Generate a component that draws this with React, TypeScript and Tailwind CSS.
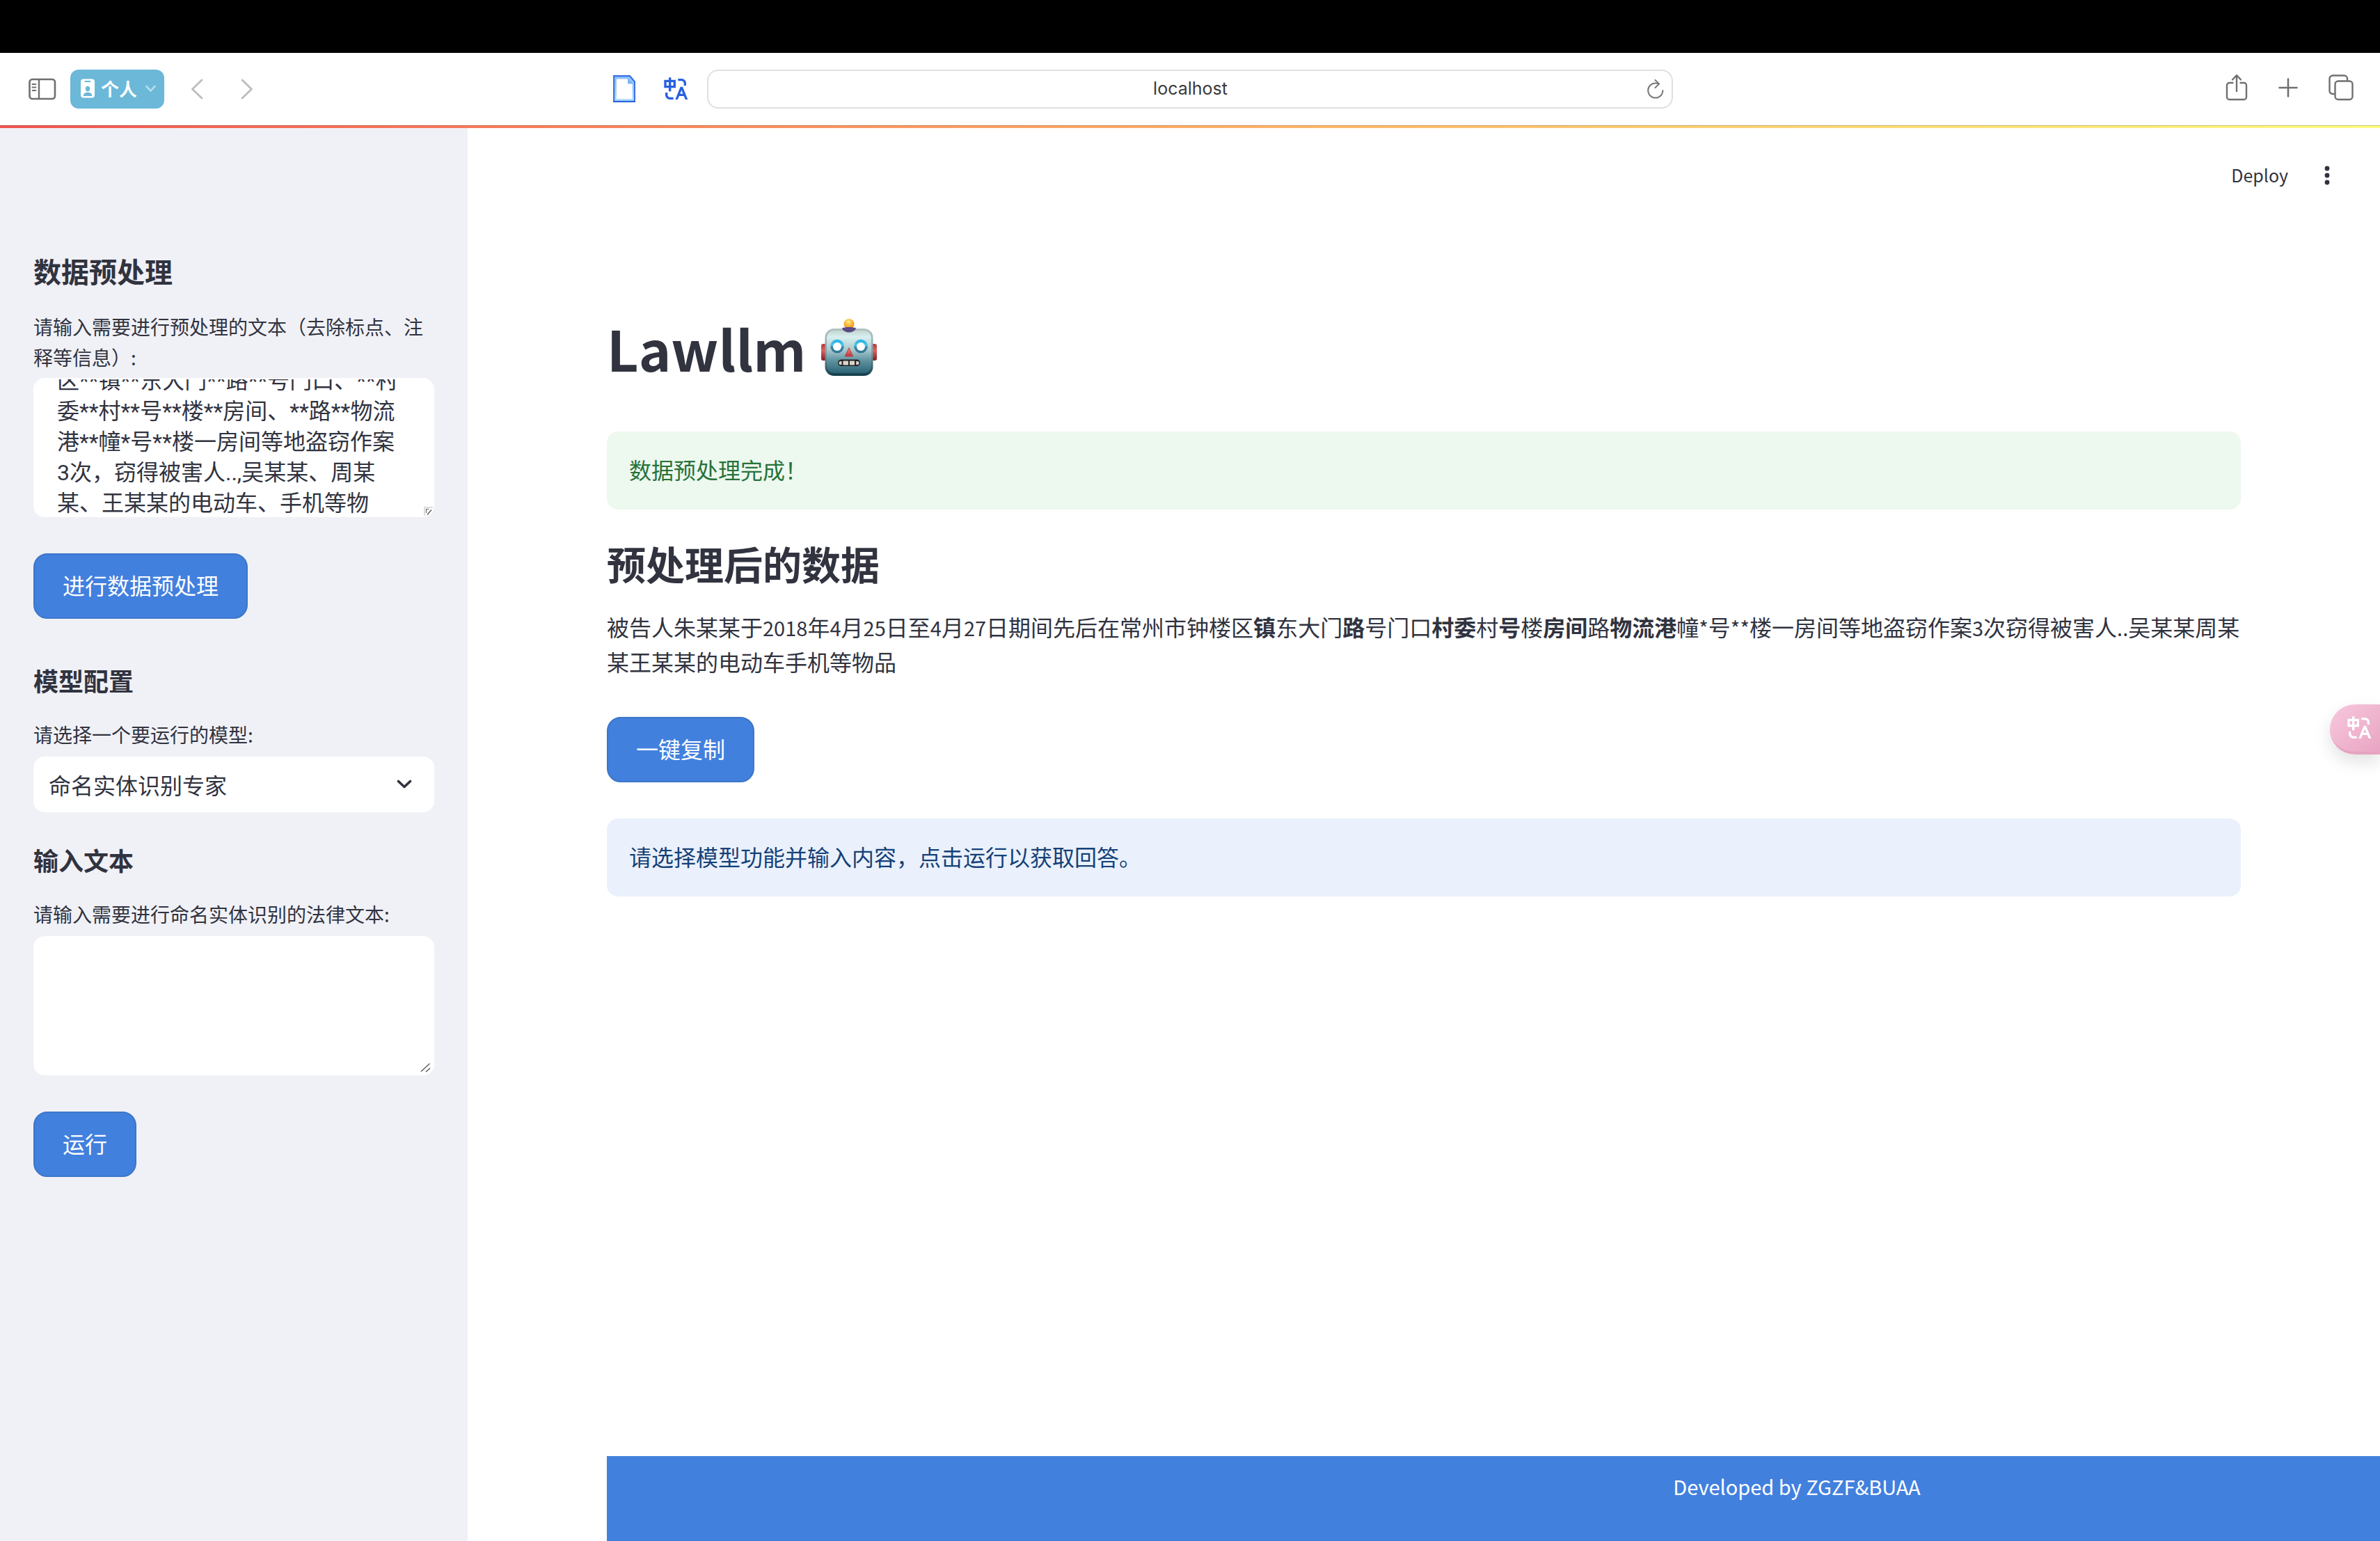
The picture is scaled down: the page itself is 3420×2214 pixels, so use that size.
import { useLayoutEffect, useRef, useState } from "react";
import type { ReactNode } from "react";
import { RiTranslate } from "react-icons/ri";

const SOURCE_TEXT =
  "被告人朱某某于2018年4月25日至4月27日期间，先后在常州市钟楼\n区**镇**东大门**路**号门口、**村委**村**号**楼**房间、**路**物流港**幢*号**楼一房间等地盗窃作案3次，窃得被害人..,吴某某、周某某、王某某的电动车、手机等物品。";

function SidebarIcon() {
  return (
    <svg width="40" height="32" viewBox="0 0 40 32" fill="none" stroke="#6f6f6f">
      <rect x="1.5" y="2" width="36.5" height="28" rx="4" strokeWidth="2.6" />
      <path d="M15 2v28" strokeWidth="2.4" />
      <path d="M5.5 9h5M5.5 13.5h5M5.5 18h5" strokeWidth="1.8" strokeLinecap="round" />
    </svg>
  );
}

function BadgeIcon() {
  return (
    <svg width="20" height="28" viewBox="0 0 20 28">
      <rect x="0" y="0.5" width="20" height="27" rx="4" fill="#fff" />
      <path d="M6.5 4h7" stroke="#6bb8d8" strokeWidth="2" strokeLinecap="round" />
      <ellipse cx="10" cy="14.6" rx="3.2" ry="3.8" fill="#6bb8d8" />
      <path d="M3.6 25c.3-3.400 2.600-5.200 6.400-5.200s6.100 1.800 6.400 5.200z" fill="#6bb8d8" />
    </svg>
  );
}

function DocumentIcon() {
  return (
    <svg width="32" height="40" viewBox="0 0 32 40">
      <defs>
        <linearGradient id="doc-fill" x1="0" y1="0" x2="0" y2="1">
          <stop offset="0" stopColor="#8fc1fb" />
          <stop offset="1" stopColor="#b4e2fd" />
        </linearGradient>
      </defs>
      <path d="M1.200 1.200h22.800l7 8v28.600h-29.800z" fill="url(#doc-fill)" stroke="#3c70e6" strokeWidth="2.200" />
      <path d="M0.200 38h31.600" stroke="#2c62d8" strokeWidth="2" />
      <path d="M5 5.500h16v7h6.500v21.500h-22.500z" fill="#fff" />
      <path d="M21 4v8h8z" fill="#7db4f6" />
    </svg>
  );
}

function ReloadIcon() {
  return (
    <svg width="24" height="30" viewBox="0 0 24 30" fill="none" stroke="#7a7a7a" strokeWidth="2" strokeLinecap="round" strokeLinejoin="round">
      <path d="M22.400 17a10.600 10.600 0 1 1-10.600-10.600c2 0 3.400.3 5 .9" />
      <path d="M11.500 2l5.500 5.500-5.500 5.500" />
    </svg>
  );
}

function ShareIcon() {
  return (
    <svg width="32" height="40" viewBox="0 0 32 40" fill="none" stroke="#707070" strokeWidth="2.400" strokeLinecap="round" strokeLinejoin="round">
      <path d="M10.500 13h-5a3.500 3.500 0 0 0-3.500 3.500v17a3.500 3.500 0 0 0 3.500 3.500h21a3.500 3.500 0 0 0 3.500-3.500v-17a3.500 3.500 0 0 0-3.500-3.500h-5" />
      <path d="M16 25v-22.500M10 8.500l6-6.300 6 6.300" />
    </svg>
  );
}

function PlusIcon() {
  return (
    <svg width="28" height="28" viewBox="0 0 28 28" fill="none" stroke="#707070" strokeWidth="2.600" strokeLinecap="round">
      <path d="M14 1.500v25M1.500 14h25" />
    </svg>
  );
}

function TabsIcon() {
  return (
    <svg width="36" height="38" viewBox="0 0 36 38" fill="none" stroke="#707070" strokeWidth="2.400">
      <path d="M9.500 28h-3.500a4.500 4.500 0 0 1-4.500-4.500v-17.500a4.500 4.500 0 0 1 4.500-4.500h16.500a4.500 4.500 0 0 1 4.500 4.500v3.500" />
      <rect x="9.500" y="9.500" width="25" height="26.500" rx="4.500" />
    </svg>
  );
}

function RobotIcon() {
  return (
    <svg className="h-[84px] w-[80px]" viewBox="0 0 80 84" role="img" aria-label="🤖">
      <defs>
        <linearGradient id="robot-face" x1="0" y1="0" x2="0" y2="1">
          <stop offset="0" stopColor="#c3d6d3" />
          <stop offset="0.150" stopColor="#d9efef" />
          <stop offset="0.450" stopColor="#a9c9cf" />
          <stop offset="0.700" stopColor="#5f93a0" />
          <stop offset="1" stopColor="#2c6476" />
        </linearGradient>
        <linearGradient id="robot-rim" x1="0" y1="0" x2="0" y2="1">
          <stop offset="0" stopColor="#b3c4c0" />
          <stop offset="0.500" stopColor="#7fa0a5" />
          <stop offset="1" stopColor="#123c4b" />
        </linearGradient>
        <radialGradient id="robot-bulb" cx="0.450" cy="0.300" r="0.700">
          <stop offset="0" stopColor="#fff08a" />
          <stop offset="0.500" stopColor="#fdb93a" />
          <stop offset="1" stopColor="#e8851b" />
        </radialGradient>
        <linearGradient id="robot-ear" x1="0" y1="0" x2="0" y2="1">
          <stop offset="0" stopColor="#b23a3c" />
          <stop offset="0.400" stopColor="#e0605f" />
          <stop offset="1" stopColor="#7d1f24" />
        </linearGradient>
        <linearGradient id="robot-eye" x1="0" y1="0" x2="0" y2="1">
          <stop offset="0" stopColor="#22b5e6" />
          <stop offset="0.450" stopColor="#4cc3e6" />
          <stop offset="0.550" stopColor="#3c87a3" />
          <stop offset="1" stopColor="#2f7390" />
        </linearGradient>
        <linearGradient id="robot-nose" x1="0" y1="0" x2="0" y2="1">
          <stop offset="0" stopColor="#f08a80" />
          <stop offset="1" stopColor="#c2353a" />
        </linearGradient>
      </defs>
      <rect x="0" y="36" width="8" height="24" rx="3" fill="url(#robot-ear)" />
      <rect x="72" y="36" width="8" height="24" rx="3" fill="url(#robot-ear)" />
      <rect x="5.500" y="14" width="69" height="68" rx="13" fill="url(#robot-rim)" />
      <rect x="8" y="17" width="64" height="61" rx="10" fill="url(#robot-face)" />
      <circle cx="40" cy="7.500" r="7.500" fill="url(#robot-bulb)" />
      <path d="M30 13.500c3-2 17-2 20 0-1 3.500-5 6-10 6s-9-2.500-10-6z" fill="#5a4a86" />
      <circle cx="23" cy="39.500" r="9.800" fill="url(#robot-eye)" />
      <circle cx="23" cy="40" r="6" fill="#fff" />
      <circle cx="57" cy="39.500" r="9.800" fill="url(#robot-eye)" />
      <circle cx="57" cy="40" r="6" fill="#fff" />
      <path d="M40 41.500l5.800 12.500h-11.600z" fill="url(#robot-nose)" stroke="#b13a3e" strokeWidth="0.800" strokeLinejoin="round" />
      <rect x="24" y="58.500" width="32" height="9.500" rx="4.700" fill="#232323" />
      <path d="M29.500 61h-1.500a2.500 2.500 0 0 0 0 5h1.500zM31.500 60.500h7.500v6h-7.500zM41 60.500h7v6h-7zM50.200 61h1.800a2.500 2.500 0 0 1 0 5h-1.800z" fill="#d9d4cc" />
    </svg>
  );
}

function ResizeGrip() {
  return (
    <svg className="pointer-events-none absolute right-1 bottom-1" width="16" height="14" viewBox="0 0 16 14" fill="none" stroke="#5f5f5f" strokeWidth="1.500">
      <path d="M1 12.500l12.500-11.500M8 13l6-5.500" />
    </svg>
  );
}

function SmallGrip() {
  return (
    <svg className="pointer-events-none absolute right-0.5 bottom-0.5" width="13" height="13" viewBox="0 0 13 13" fill="none">
      <path d="M1 13v-12h12" stroke="#dcdcdc" strokeWidth="2" />
      <path d="M3.500 9v-5.500h4" stroke="#6a6a6a" strokeWidth="1.200" />
      <path d="M5 11.500l6-7" stroke="#5f5f5f" strokeWidth="1.500" />
    </svg>
  );
}

function PrimaryButton({ children }: { children: ReactNode }) {
  return (
    <button
      type="button"
      className="h-[94px] self-start rounded-[20px] border-2 border-[#3e75c8] bg-[#4280de] px-10 pb-1 text-[32px] leading-[44px] text-white"
    >
      {children}
    </button>
  );
}

/* Latin runs are set a little smaller so that they sit well beside the Chinese text. */
function Latin({ children }: { children: ReactNode }) {
  return <span className="text-[29px] leading-none">{children}</span>;
}

function BrowserBar() {
  return (
    <header className="grid h-[104px] grid-cols-[1fr_1388px_1fr] items-center bg-white">
      <div className="flex items-center pr-[25px] pl-[41px]">
        <button type="button" aria-label="边栏">
          <SidebarIcon />
        </button>
        <button
          type="button"
          className="ml-5 flex h-14 w-[135px] items-center rounded-xl bg-[#6bb8d8] pb-0.5 pl-[15px] text-[26px] font-bold text-white"
        >
          <BadgeIcon />
          <span className="ml-[9px] leading-[36px]">个人</span>
          <svg className="ml-3" width="15" height="11" viewBox="0 0 15 11" fill="none" stroke="#b4dceb" strokeWidth="2.600" strokeLinecap="round" strokeLinejoin="round">
            <path d="M1.500 2l6 6.500 6-6.500" />
          </svg>
        </button>
        <button type="button" aria-label="后退" className="ml-[38px]">
          <svg width="18" height="30" viewBox="0 0 18 30" fill="none" stroke="#bdbdbd" strokeWidth="2.800" strokeLinecap="round" strokeLinejoin="round">
            <path d="M16 2l-13.500 13 13.500 13" />
          </svg>
        </button>
        <button type="button" aria-label="前进" className="ml-[54px]">
          <svg width="18" height="30" viewBox="0 0 18 30" fill="none" stroke="#bdbdbd" strokeWidth="2.800" strokeLinecap="round" strokeLinejoin="round">
            <path d="M2 2l13.500 13-13.500 13" />
          </svg>
        </button>
        <button type="button" aria-label="文稿" className="ml-auto">
          <DocumentIcon />
        </button>
        <button type="button" aria-label="翻译" className="ml-[38px]">
          <RiTranslate className="size-10 text-[#2860e0]" />
        </button>
      </div>
      <div className="flex h-14 items-center rounded-2xl border-2 border-[#e0e0e0] pr-[11px]">
        <input
          aria-label="地址"
          defaultValue="localhost"
          className="min-w-0 flex-1 bg-transparent pl-9 text-center font-['Inter'] text-[25px] text-[#3a3a3a] outline-none"
        />
        <button type="button" aria-label="重新载入">
          <ReloadIcon />
        </button>
      </div>
      <div className="flex items-center justify-end gap-11 pr-[38px] pb-1">
        <button type="button" aria-label="共享">
          <ShareIcon />
        </button>
        <button type="button" aria-label="新标签页">
          <PlusIcon />
        </button>
        <button type="button" aria-label="标签页概览">
          <TabsIcon />
        </button>
      </div>
    </header>
  );
}

function Sidebar() {
  const source = useRef<HTMLTextAreaElement>(null);
  const [model, setModel] = useState("命名实体识别专家");

  useLayoutEffect(() => {
    if (source.current) source.current.scrollTop = 140;
  }, []);

  return (
    <aside className="flex w-[672px] shrink-0 flex-col bg-[#f0f1f6] px-12 pt-[181px]">
      <h2 className="text-[40px] leading-[48px] font-bold">数据预处理</h2>
      <label htmlFor="source" className="mt-[34px] mb-2 text-[28px] leading-[44px]">
        请输入需要进行预处理的文本（去除标点、注释等信息）:
      </label>
      <div className="relative">
        <textarea
          id="source"
          ref={source}
          defaultValue={SOURCE_TEXT}
          className="block h-[200px] w-full resize-none rounded-2xl border-2 border-white bg-white py-8 pr-11 pl-8 font-['Roboto','Noto_Sans_CJK_SC',sans-serif] text-[32px] leading-[44px] outline-none [scrollbar-width:none]"
        />
        <SmallGrip />
      </div>
      <div className="mt-[52px] flex">
        <PrimaryButton>进行数据预处理</PrimaryButton>
      </div>

      <h3 className="mt-[66px] text-[36px] leading-[44px] font-bold">模型配置</h3>
      <label htmlFor="model" className="mt-[34px] mb-2.5 text-[28px] leading-[44px]">
        请选择一个要运行的模型:
      </label>
      <div className="relative">
        <select
          id="model"
          value={model}
          onChange={(e) => setModel(e.target.value)}
          className="h-20 w-full appearance-none rounded-2xl bg-white pr-16 pl-[22px] text-[32px] outline-none"
        >
          <option>命名实体识别专家</option>
        </select>
        <svg className="pointer-events-none absolute top-8 right-8" width="22" height="16" viewBox="0 0 22 16" fill="none" stroke="#31333f" strokeWidth="3.600" strokeLinecap="round" strokeLinejoin="round">
          <path d="M2.500 3.500l8.500 8 8.500-8" />
        </svg>
      </div>

      <h3 className="mt-[46px] text-[36px] leading-[44px] font-bold">输入文本</h3>
      <label htmlFor="legal" className="mt-[34px] mb-2.5 text-[28px] leading-[44px]">
        请输入需要进行命名实体识别的法律文本:
      </label>
      <div className="relative">
        <textarea
          id="legal"
          className="block h-[200px] w-full resize-none rounded-2xl bg-white px-8 py-8 text-[32px] leading-[44px] outline-none"
        />
        <ResizeGrip />
      </div>
      <div className="mt-[52px] flex">
        <PrimaryButton>运行</PrimaryButton>
      </div>
    </aside>
  );
}

function Main() {
  return (
    <main className="relative flex min-w-0 flex-1 flex-col overflow-hidden bg-white">
      <div className="flex h-[136px] items-center justify-end gap-12 pr-[68px]">
        <button type="button" className="text-[25px]">
          Deploy
        </button>
        <button type="button" aria-label="菜单">
          <svg width="16" height="30" viewBox="0 0 16 30" fill="#31333f">
            <circle cx="8" cy="5" r="3.400" />
            <circle cx="8" cy="15" r="3.400" />
            <circle cx="8" cy="25" r="3.400" />
          </svg>
        </button>
      </div>

      <div className="flex flex-col px-[200px] pt-32">
        <h1 className="flex items-center gap-[22px] text-[79px] leading-[104px] font-bold">
          Lawllm
          <RobotIcon />
        </h1>
        <div role="status" className="mt-[68px] rounded-2xl bg-[#edf8ef] px-8 pt-7 pb-8 text-[32px] leading-[52px] text-[#27723a]">
          数据预处理完成！
        </div>
        <h2 className="mt-[41px] text-[56px] leading-[72px] font-bold">预处理后的数据</h2>
        <p className="mt-[30px] text-[32px] leading-[50px]">
          被告人朱某某于<Latin>2018</Latin>年<Latin>4</Latin>月<Latin>25</Latin>日至<Latin>4</Latin>月<Latin>27</Latin>
          日期间先后在常州市钟楼区<strong>镇</strong>东大门<strong>路</strong>号门口<strong>村委</strong>村
          <strong>号</strong>楼<strong>房间</strong>路<strong>物流港</strong>幢<Latin>*</Latin>号<Latin>**</Latin>
          楼一房间等地盗窃作案<Latin>3</Latin>次窃得被害人<Latin>..</Latin>吴某某周某某王某某的电动车手机等物品
        </p>
        <div className="mt-[55px] flex">
          <PrimaryButton>一键复制</PrimaryButton>
        </div>
        <div role="note" className="mt-[52px] rounded-2xl bg-[#eaf1fc] px-8 pt-7 pb-8 text-[32px] leading-[52px] text-[#154178]">
          请选择模型功能并输入内容，点击运行以获取回答。
        </div>
      </div>

      <footer className="mt-auto ml-[200px] h-[122px] overflow-hidden bg-[#4280de]">
        <p className="w-screen pt-[18px] text-center text-[29px] leading-[50px] text-white">Developed by ZGZF&amp;BUAA</p>
      </footer>

      <button
        type="button"
        aria-label="翻译此页"
        className="absolute top-[828px] right-0 flex h-[72px] w-[72px] items-center rounded-l-full border-b-4 border-[#e6a3c1] bg-linear-to-br from-[#f7c8de] to-[#e9a5c3] pl-[22px] shadow-[0_10px_24px_rgba(0,0,0,0.12)]"
      >
        <RiTranslate className="size-10 shrink-0 text-white" />
      </button>
    </main>
  );
}

export default function App() {
  return (
    <div lang="zh-CN" className="flex min-h-screen flex-col bg-white font-['Noto_Sans_CJK_SC',sans-serif] text-[#31333f]">
      <div className="h-[76px] bg-black" />
      <BrowserBar />
      <div className="h-1 border-t border-black/20 bg-linear-to-r from-[#f2544f] to-[#fffd80]" />
      <div className="flex flex-1">
        <Sidebar />
        <Main />
      </div>
    </div>
  );
}
